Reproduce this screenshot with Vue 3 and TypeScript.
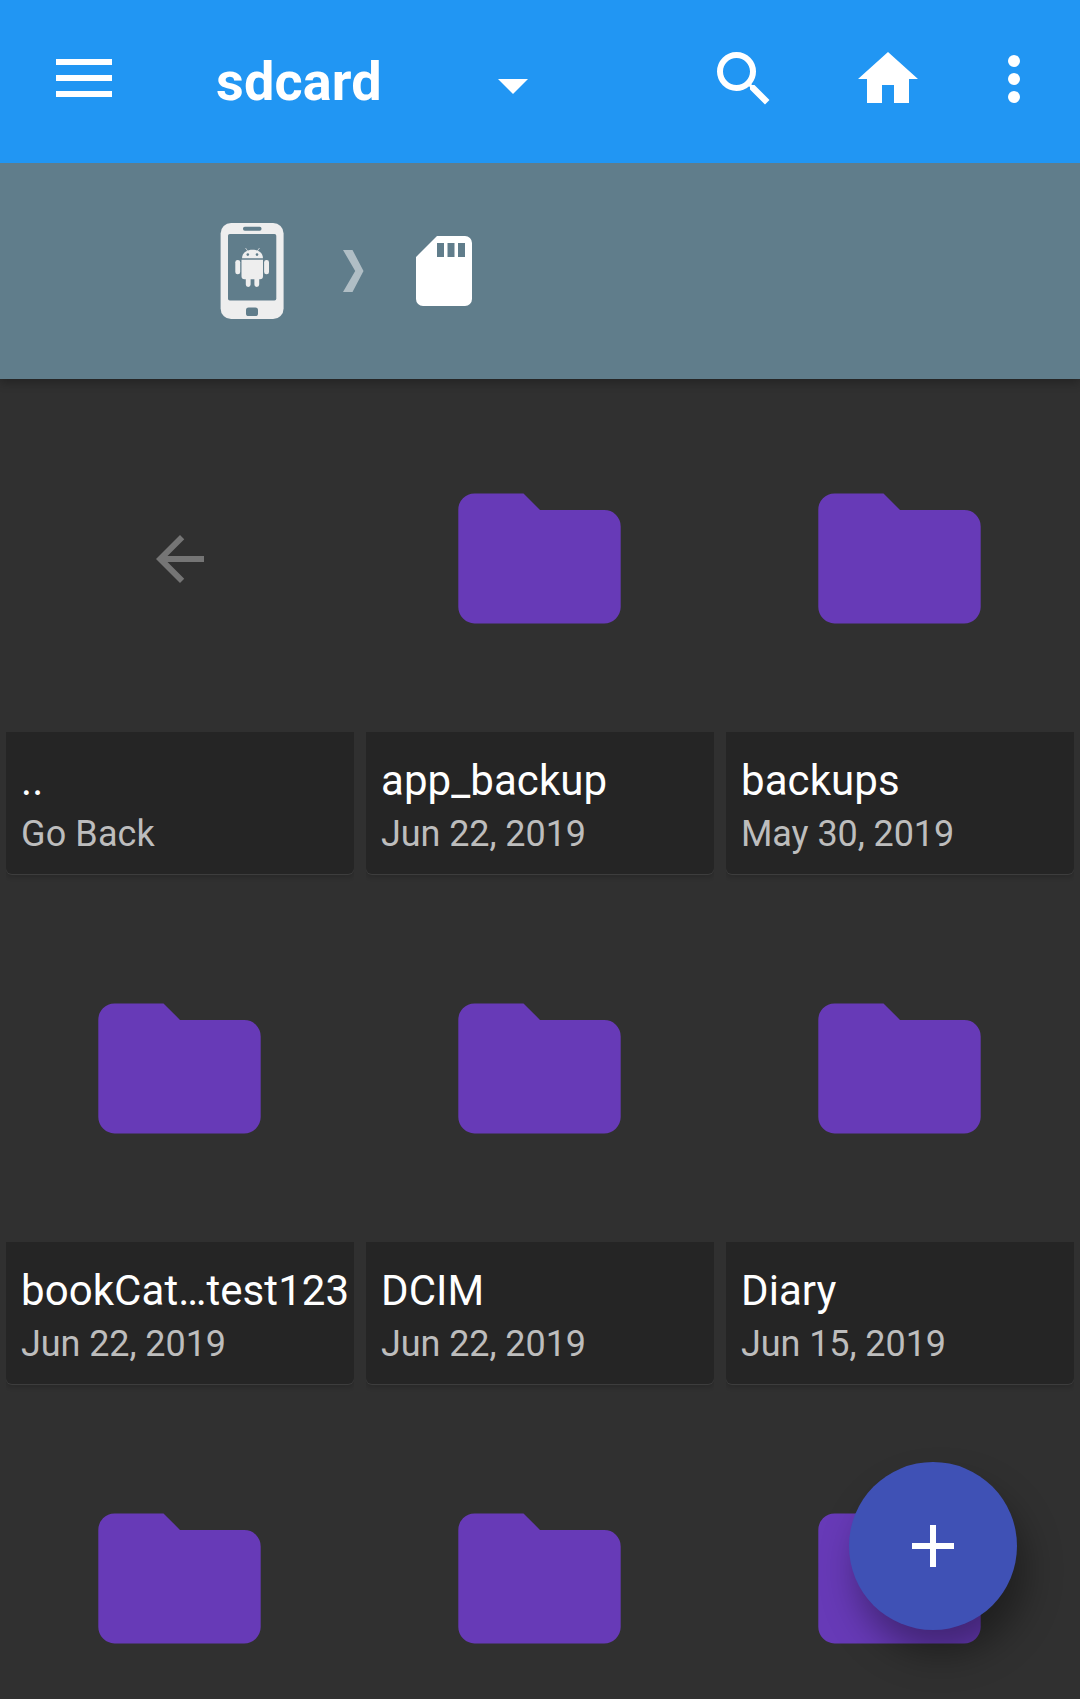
<script setup lang="ts">
interface Entry {
  name: string
  detail: string
  parent?: boolean
}

const entries: Entry[] = [
  { name: '..', detail: 'Go Back', parent: true },
  { name: 'app_backup', detail: 'Jun 22, 2019' },
  { name: 'backups', detail: 'May 30, 2019' },
  { name: 'bookCat…test123', detail: 'Jun 22, 2019' },
  { name: 'DCIM', detail: 'Jun 22, 2019' },
  { name: 'Diary', detail: 'Jun 15, 2019' },
  { name: '', detail: '' },
  { name: '', detail: '' },
  { name: '', detail: '' },
]
</script>

<template>
  <div class="screen">
    <header class="toolbar">
      <svg class="menu" width="56" height="38" viewBox="0 0 56 38">
        <path d="M0 0h56v6H0zM0 16h56v6H0zM0 32h56v6H0z" fill="#fff" />
      </svg>
      <h1 class="title">sdcard</h1>
      <svg class="caret" width="30" height="15" viewBox="0 0 30 15">
        <path d="M0 0h30L15 15z" fill="#fff" />
      </svg>
      <svg class="search" width="72" height="72" viewBox="0 0 24 24">
        <path
          d="M15.5 14h-.79l-.28-.27A6.471 6.471 0 0 0 16 9.5 6.5 6.5 0 1 0 9.5 16c1.61 0 3.09-.59 4.23-1.57l.27.28v.79l5 4.99L20.49 19l-4.99-5zm-6 0C7.01 14 5 11.99 5 9.5S7.01 5 9.5 5 14 7.01 14 9.5 11.99 14 9.5 14z"
          fill="#fff"
        />
      </svg>
      <svg class="home" width="72" height="72" viewBox="0 0 24 24">
        <path d="M10 20v-6h4v6h5v-8h3L12 3 2 12h3v8z" fill="#fff" />
      </svg>
      <svg class="more" width="12" height="48" viewBox="0 0 12 48">
        <circle cx="6" cy="6" r="6" fill="#fff" />
        <circle cx="6" cy="24" r="6" fill="#fff" />
        <circle cx="6" cy="42" r="6" fill="#fff" />
      </svg>
    </header>

    <nav class="path">
      <svg class="phone" width="64" height="96" viewBox="0 0 64 96">
        <rect x="0.6" y="0" width="63" height="96" rx="10.5" fill="#eee" />
        <rect x="23" y="3.7" width="18.5" height="4" rx="1.8" fill="#607d8b" />
        <rect x="8" y="11" width="48.3" height="66.5" rx="1.8" fill="#607d8b" />
        <rect x="26" y="84.5" width="12" height="8.5" rx="2.6" fill="#607d8b" />
        <g fill="#eee">
          <path d="M22 35.2c0-5 4.500-8.400 10.500-8.400s10.500 3.400 10.500 8.400z" />
          <path d="M21.500 36.700h21.500v16.500a3 3 0 0 1-3 3h-.8v5.300a2.400 2.400 0 0 1-4.800 0v-5.300h-3.800v5.300a2.400 2.400 0 0 1-4.800 0v-5.300h-1.300a3 3 0 0 1-3-3z" />
          <rect x="15.300" y="37" width="4.900" height="14.200" rx="2.300" />
          <rect x="44.100" y="37" width="4.900" height="14.200" rx="2.300" />
        </g>
        <path d="M25.500 25l2.600 3.600M39.500 25l-2.600 3.600" stroke="#eee" stroke-opacity="0.7" stroke-width="1" />
        <circle cx="27.800" cy="31.600" r="1.300" fill="#607d8b" />
        <circle cx="37" cy="31.600" r="1.300" fill="#607d8b" />
      </svg>
      <svg class="sep" width="21" height="42" viewBox="0 0 21 42">
        <path d="M0 0h9.500L20.500 21 9.500 42H0l12.200-21z" fill="#b0bec5" />
      </svg>
      <svg class="sd" width="56" height="70" viewBox="0 0 56 70">
        <path
          fill-rule="evenodd"
          d="M21 0h28a7 7 0 0 1 7 7v56a7 7 0 0 1-7 7H7a7 7 0 0 1-7-7V21zM21 7v14h7V7zM31.500 7v14h7V7zM42 7v14h7V7z"
          fill="#fff"
        />
      </svg>
    </nav>

    <main class="grid">
      <article v-for="(entry, i) in entries" :key="i" class="tile">
        <div class="thumb">
          <svg v-if="entry.parent" width="72" height="72" viewBox="0 0 24 24">
            <path
              d="M20 11H7.830l5.590-5.590L12 4l-8 8 8 8 1.410-1.410L7.830 13H20v-2z"
              fill="#757575"
            />
          </svg>
          <svg v-else width="164" height="132" viewBox="0 0 164 132">
            <path
              d="M16.500 .4H65.500L82 16.900H146a16.500 16.500 0 0 1 16.700 16.500V114A16.500 16.500 0 0 1 146 130.400H16.500A16.500 16.500 0 0 1 .3 114V17A16.500 16.500 0 0 1 16.500 .4z"
              fill="#673ab7"
            />
          </svg>
        </div>
        <div class="info">
          <div class="name">{{ entry.name }}</div>
          <div class="detail" :class="{ dated: !entry.parent }">{{ entry.detail }}</div>
        </div>
      </article>
    </main>

    <button class="fab" type="button" aria-label="Add">
      <svg width="42" height="42" viewBox="0 0 42 42">
        <path d="M18 0h6v18h18v6H24v18h-6V24H0v-6h18z" fill="#fff" />
      </svg>
    </button>
  </div>
</template>

<style>
body {
  margin: 0;
  background: #303030;
}
</style>

<style scoped>
.screen {
  position: relative;
  width: 1080px;
  height: 1699px;
  overflow: hidden;
  background: #303030;
  font-family: Roboto, 'Liberation Sans', sans-serif;
}
svg {
  display: block;
  flex: none;
}
.toolbar {
  position: relative;
  z-index: 1;
  display: flex;
  align-items: flex-start;
  box-sizing: border-box;
  height: 163px;
  padding-left: 56px;
  background: #2196f3;
}
.menu {
  margin-top: 59px;
}
.title {
  width: 282px;
  margin: 50px 0 0 104px;
  color: #fff;
  font-size: 54px;
  font-weight: 700;
  letter-spacing: 0.15px;
  line-height: 64px;
}
.caret {
  margin-top: 79px;
}
.search {
  margin: 43px 0 0 180px;
}
.home {
  margin: 43px 0 0 72px;
}
.more {
  margin: 55px 0 0 84px;
}
.path {
  position: relative;
  display: flex;
  align-items: center;
  box-sizing: border-box;
  height: 216px;
  padding-left: 220px;
  background: #607d8b;
  box-shadow: 0 3px 10px rgba(0, 0, 0, 0.3);
}
.sep {
  margin-left: 59px;
}
.sd {
  margin-left: 52px;
}
.grid {
  display: grid;
  grid-template-columns: repeat(3, 348px);
  gap: 22px 12px;
  padding: 7px 6px 0;
}
.thumb {
  display: flex;
  align-items: center;
  justify-content: center;
  height: 346px;
}
.info {
  box-sizing: border-box;
  height: 142px;
  padding: 24px 0 0 15px;
  border-radius: 0 0 6px 6px;
  background: #252525;
  box-shadow: 0 1px 0 #3d3d3d, 0 4px 4px rgba(0, 0, 0, 0.14);
  clip-path: inset(0 0 -10px 0);
  white-space: nowrap;
}
.name {
  height: 50px;
  color: #fff;
  font-size: 42px;
  letter-spacing: 0.08px;
  line-height: 50px;
}
.detail {
  margin-top: 7px;
  color: #bdbdbd;
  font-size: 36px;
  letter-spacing: 0.12px;
  line-height: 42px;
}
.detail.dated {
  letter-spacing: -0.08px;
}
.fab {
  position: absolute;
  right: 63px;
  bottom: 69px;
  display: flex;
  align-items: center;
  justify-content: center;
  width: 168px;
  height: 168px;
  padding: 0;
  border: 0;
  border-radius: 50%;
  background: #3f51b5;
  box-shadow: 8px 24px 36px rgba(0, 0, 0, 0.36);
}
</style>
